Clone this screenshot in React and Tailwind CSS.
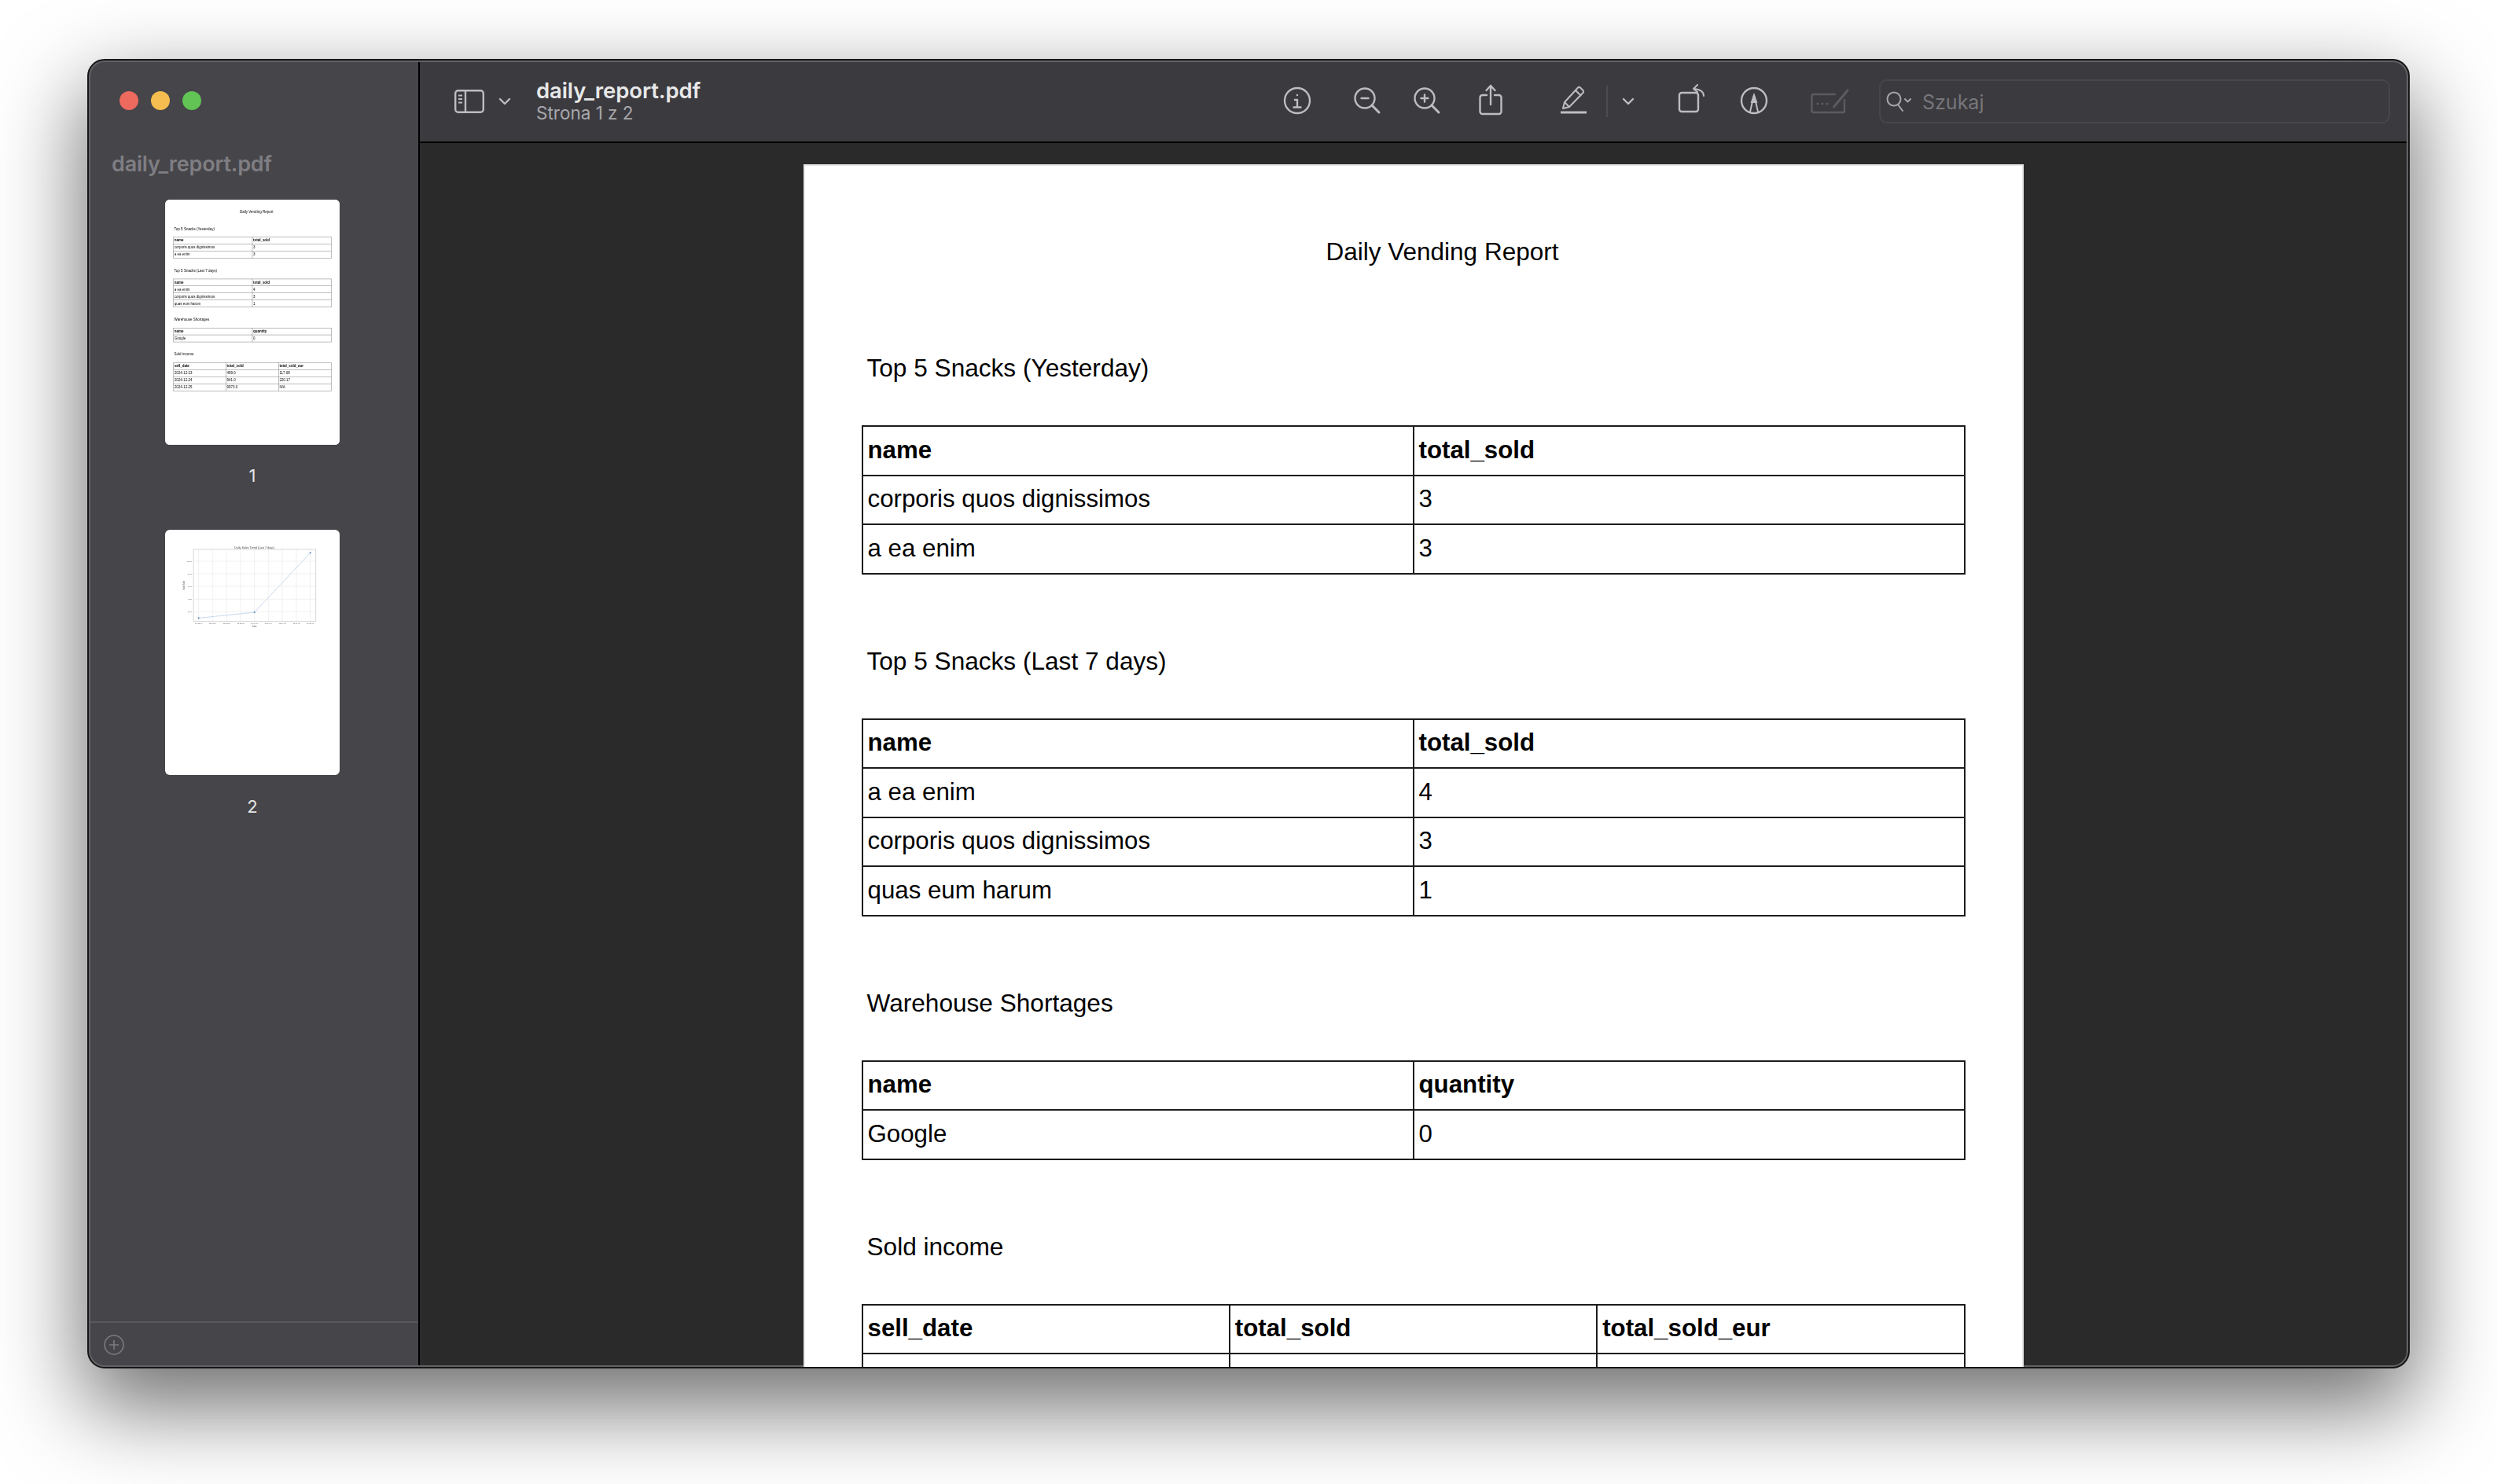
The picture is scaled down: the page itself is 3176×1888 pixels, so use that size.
const tables = [
  {
    heading: "Top 5 Snacks (Yesterday)",
    cols: ["name", "total_sold"],
    rows: [
      ["corporis quos dignissimos", "3"],
      ["a ea enim", "3"],
    ],
  },
  {
    heading: "Top 5 Snacks (Last 7 days)",
    cols: ["name", "total_sold"],
    rows: [
      ["a ea enim", "4"],
      ["corporis quos dignissimos", "3"],
      ["quas eum harum", "1"],
    ],
  },
  {
    heading: "Warehouse Shortages",
    cols: ["name", "quantity"],
    rows: [["Google", "0"]],
  },
  {
    heading: "Sold income",
    cols: ["sell_date", "total_sold", "total_sold_eur"],
    rows: [
      ["2024-12-23", "499.0", "117.08"],
      ["2024-12-24", "941.0", "220.17"],
      ["2024-12-25", "9973.0", "N/A"],
    ],
  },
];

function ReportPage() {
  return (
    <div className="w-[1552px] h-[2181px] shrink-0 bg-white text-black px-[74px] pt-[89px] font-['Liberation_Sans',Arial,sans-serif] text-[31.25px] shadow-[inset_0_0_0_2px_#e8e8e8]">
      <div className="h-[40px] leading-[44px] pl-[591px] text-[31.5px]">Daily Vending Report</div>
      {tables.map((t, i) => (
        <div key={t.heading} className={i === 0 ? "pt-[108px]" : "pt-[88px]"}>
          <div className="h-[40px] leading-[44px] pl-[7px] text-[31.6px]">{t.heading}</div>
          <table className="w-full mt-[55px] table-fixed border-collapse">
            <thead>
              <tr>
                {t.cols.map((c) => (
                  <th key={c} className="h-[62.5px] border-2 border-[#1c1c1c] pl-[6px] text-left font-bold">
                    {c}
                  </th>
                ))}
              </tr>
            </thead>
            <tbody>
              {t.rows.map((r) => (
                <tr key={r[0]}>
                  {r.map((v, j) => (
                    <td key={j} className="h-[62.5px] border-2 border-[#1c1c1c] pl-[6px]">
                      {v}
                    </td>
                  ))}
                </tr>
              ))}
            </tbody>
          </table>
        </div>
      ))}
    </div>
  );
}

function ChartThumb() {
  const gridX = [188, 241, 295, 348, 401, 454, 507, 561, 614];
  const gridY = [192, 240, 288, 337, 385];
  const xLabels = ["12-23 00", "12-23 06", "12-23 12", "12-23 18", "12-24 00", "12-24 06", "12-24 12", "12-24 18", "12-25 00"];
  const yLabels = ["10000", "8000", "6000", "4000", "2000"];
  return (
    <svg viewBox="60 72 666 936" className="w-[222px] h-[312px] blur-[0.4px]" fontFamily="Liberation Sans, Arial, sans-serif">
      <text x="401" y="143" textAnchor="middle" fontSize="11" fill="#444">
        Daily Sales Trend (Last 7 days)
      </text>
      {gridX.map((x, i) => (
        <g key={x}>
          <line x1={x} x2={x} y1="147" y2="422" stroke="#e2e2e2" strokeWidth="1.5" />
          <text x={x} y="433" textAnchor="middle" fontSize="7" fill="#555">
            {xLabels[i]}
          </text>
        </g>
      ))}
      {gridY.map((y, i) => (
        <g key={y}>
          <line x1="168" x2="635" y1={y} y2={y} stroke="#e2e2e2" strokeWidth="1.5" />
          <text x="162" y={y + 3} textAnchor="end" fontSize="7" fill="#555">
            {yLabels[i]}
          </text>
        </g>
      ))}
      <rect x="168" y="147" width="467" height="275" fill="none" stroke="#cfcfcf" strokeWidth="2.5" />
      <text x="401" y="445" textAnchor="middle" fontSize="8" fill="#555">
        Date
      </text>
      <text x="134" y="285" textAnchor="middle" fontSize="8" fill="#555" transform="rotate(-90 134 285)">
        Total Sold
      </text>
      <polyline points="188,409 401,387 614,160" fill="none" stroke="#a9c6e6" strokeWidth="2" />
      <circle cx="188" cy="409" r="3" fill="#4a7fc0" />
      <circle cx="401" cy="387" r="3" fill="#4a7fc0" />
      <circle cx="614" cy="160" r="3" fill="#4a7fc0" />
    </svg>
  );
}

function Sidebar() {
  return (
    <aside className="w-[419px] h-full shrink-0 flex flex-col bg-[#46454a] border-r-2 border-black box-content">
      <div className="flex gap-[16px] pl-[39px] pt-[39px]">
        <span className="w-[24px] h-[24px] rounded-full bg-[#ee6a5f]" />
        <span className="w-[24px] h-[24px] rounded-full bg-[#f5bd4f]" />
        <span className="w-[24px] h-[24px] rounded-full bg-[#61c454]" />
      </div>
      <div className="mt-[53px] pl-[29px] h-[32px] leading-[32px] text-[27px] font-semibold text-[#7f7e83] font-['Inter',sans-serif] tracking-[-0.2px]">
        daily_report.pdf
      </div>
      <div className="flex flex-col items-center mt-[29px] pr-[3px] font-['Inter',sans-serif] text-[22px] text-[#e6e6e6]">
        <div className="w-[222px] h-[312px] rounded-[6px] bg-white overflow-hidden">
          <div className="origin-top-left scale-[0.143] blur-[3px]">
            <ReportPage />
          </div>
        </div>
        <div className="h-[30px] leading-[30px] mt-[24px]">1</div>
        <div className="w-[222px] h-[312px] rounded-[6px] bg-white overflow-hidden mt-[54px]">
          <ChartThumb />
        </div>
        <div className="h-[30px] leading-[30px] mt-[25px]">2</div>
      </div>
      <div className="mt-auto h-[58px] border-t-2 border-[#59585d] flex items-center pl-[19px]">
        <svg width="26" height="26" viewBox="0 0 26 26" fill="none" stroke="#7c7b80" strokeWidth="1.6">
          <circle cx="13" cy="13" r="12" />
          <path d="M13 7v12M7 13h12" />
        </svg>
      </div>
    </aside>
  );
}

function Chevron({ className = "" }) {
  return (
    <svg width="16" height="10" viewBox="0 0 16 10" fill="none" stroke="#bdbcc0" strokeWidth="2.4" strokeLinecap="round" strokeLinejoin="round" className={className}>
      <path d="M2 2l6 6 6-6" />
    </svg>
  );
}

function Icon({ children, className = "", width = 44, stroke = "#bdbcc0" }) {
  return (
    <svg width={width} height="44" viewBox={`0 0 ${width} 44`} fill="none" stroke={stroke} strokeWidth="2.4" strokeLinecap="round" strokeLinejoin="round" className={`shrink-0 ${className}`}>
      {children}
    </svg>
  );
}

function Toolbar() {
  return (
    <header className="h-[103px] shrink-0 flex items-center bg-[#3b3a3f] border-b-2 border-black box-content pl-[44px] pr-[23px] font-['Inter',sans-serif]">
      <svg width="38" height="30" viewBox="0 0 38 30" fill="none" stroke="#bdbcc0" strokeWidth="2.4" className="shrink-0">
        <rect x="1.2" y="1.2" width="35.6" height="27.6" rx="3.5" />
        <path d="M14 1.2v27.6" />
        <path d="M5 7.5h5M5 12h5M5 16.5h5" strokeWidth="2" />
      </svg>
      <Chevron className="ml-[18px] shrink-0" />
      <div className="ml-[32px]">
        <div className="h-[31px] leading-[31px] text-[27.5px] font-semibold text-[#e8e8e9] tracking-[-0.1px]">daily_report.pdf</div>
        <div className="h-[26px] leading-[26px] text-[22.5px] text-[#a9a8ac]">Strona 1 z 2</div>
      </div>
      <div className="ml-auto flex items-center">
        <Icon>
          <circle cx="22" cy="21" r="16" />
          <path d="M19 20h3v9M17.5 29.5h9" />
          <circle cx="22" cy="14" r="1.2" fill="#bdbcc0" stroke="none" />
        </Icon>
        <Icon className="ml-[44px]">
          <circle cx="20" cy="18" r="12.5" />
          <path d="M29 27l9 9" strokeWidth="3" />
          <path d="M15.5 18h9" />
        </Icon>
        <Icon className="ml-[33px]">
          <circle cx="19" cy="18" r="12.5" />
          <path d="M28 27l9 9" strokeWidth="3" />
          <path d="M14.5 18h9M19 13.5v9" />
        </Icon>
        <Icon className="ml-[37px]">
          <path d="M17 14h-5.5a3 3 0 0 0-3 3v18a3 3 0 0 0 3 3h21a3 3 0 0 0 3-3V17a3 3 0 0 0-3-3H27" />
          <path d="M22 26V2M16.5 8L22 2l5.500 6" />
        </Icon>
        <Icon className="ml-[61px]">
          <path d="M9 31l2-8L28 4.500a2 2 0 0 1 3 0l3.500 3.500a2 2 0 0 1 0 3L17 29z" strokeWidth="2" />
          <path d="M11 23l6 6M25 8l6.500 6.500" strokeWidth="2" />
          <path d="M6 36h33" strokeLinecap="butt" strokeWidth="3" />
        </Icon>
        <div className="ml-[20px] w-[2px] h-[40px] bg-[#4c4b50] shrink-0" />
        <Chevron className="ml-[18px] shrink-0" />
        <Icon className="ml-[50px]">
          <rect x="7" y="11" width="24" height="24" rx="3" />
          <path d="M38 15c0-5-3-8-12-9" strokeWidth="2" />
          <path d="M30 1l-5 5 5 4" strokeWidth="2" />
        </Icon>
        <Icon className="ml-[36px]">
          <circle cx="22" cy="21" r="16" />
          <path d="M17 35l5-21 5 21" strokeWidth="2" />
          <path d="M22 11l-4.500 13h9z" fill="#bdbcc0" stroke="none" />
        </Icon>
        <Icon className="ml-[45px]" width={60} stroke="#5c5b60">
          <path d="M36 13H8.500a2 2 0 0 0-2 2v19a2 2 0 0 0 2 2H46a2 2 0 0 0 2-2V20" />
          <path d="M34.500 29L52 8" strokeWidth="3" />
          <path d="M14 25h.1M20 25h.1M26 25h.1" strokeWidth="3" />
        </Icon>
        <div className="ml-[32px] w-[650px] h-[56px] rounded-[10px] border-2 border-[#47464b] flex items-center pl-[7px]">
          <svg width="32" height="28" viewBox="0 0 32 28" fill="none" stroke="#a7a6aa" strokeWidth="2" strokeLinecap="round" strokeLinejoin="round" className="shrink-0">
            <circle cx="10" cy="11" r="8.500" />
            <path d="M15 18l6 8" />
            <path d="M24 11l3.500 3.500L31 11" />
          </svg>
          <span className="ml-[14px] mt-[4px] text-[25px] text-[#77767b]">Szukaj</span>
        </div>
      </div>
    </header>
  );
}

export default function App() {
  return (
    <div className="w-[3176px] h-[1888px] bg-white pl-[111px] pt-[75px] overflow-hidden">
      <div className="relative w-[2954px] h-[1666px] rounded-[22px] border-2 border-[#161616] bg-[#2a2a2a] overflow-hidden flex shadow-[0_44px_110px_6px_rgba(0,0,0,0.56)]">
        <Sidebar />
        <div className="flex-1 min-w-0 flex flex-col">
          <Toolbar />
          <main className="flex-1 min-h-0 overflow-hidden flex justify-center pt-[27px] pr-[2px] relative z-10">
            <ReportPage />
          </main>
        </div>
        <div className="absolute inset-0 rounded-[20px] pointer-events-none shadow-[inset_0_0_0_2px_#626165]" />
      </div>
    </div>
  );
}
